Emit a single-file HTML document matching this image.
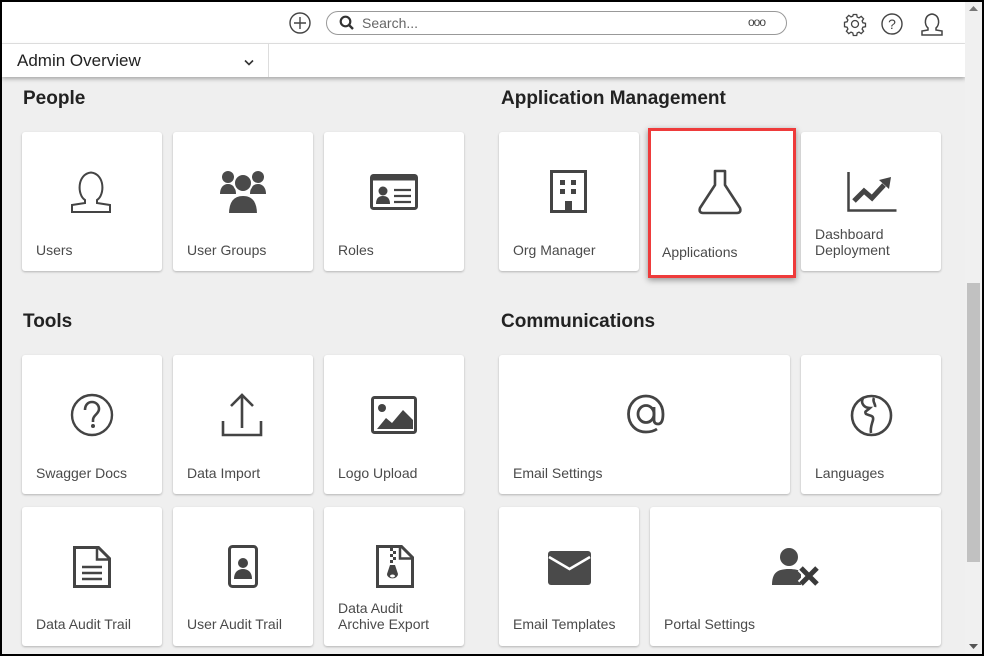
<!DOCTYPE html>
<html><head><meta charset="utf-8"><style>
*{margin:0;padding:0;box-sizing:border-box}
html,body{width:984px;height:656px;overflow:hidden;background:#000;font-family:"Liberation Sans",sans-serif;color:#444}
#f{position:absolute;left:2px;top:2px;width:980px;height:652px;background:#efefef;overflow:hidden}
.a{position:absolute}
.card{position:absolute;background:#fff;border-radius:3px;box-shadow:0 1px 2px rgba(0,0,0,.25)}
.lbl{position:absolute;font-size:14px;color:#4a4a4a;line-height:16px}
h2{position:absolute;font-size:19px;color:#222;font-weight:600}
svg{position:absolute;overflow:visible}
</style></head><body><div id="f">
<div class="a" style="left:0;top:0;width:963px;height:42px;background:#fff;border-bottom:1px solid #e4e4e4"></div>
<div class="a" style="left:0;top:42px;width:963px;height:33px;background:#fff;box-shadow:0 2px 4px rgba(0,0,0,.3)"></div>
<div class="a" style="left:266px;top:42px;width:1px;height:33px;background:#ddd"></div>
<div class="a" style="left:15px;top:49px;font-size:17px;color:#222">Admin Overview</div>
<svg style="left:242px;top:57px" width="10" height="8"><path d="M1 1.5L5 5.5L9 1.5" fill="none" stroke="#333" stroke-width="1.6"/></svg>
<svg style="left:287px;top:10px" width="22" height="22"><circle cx="11" cy="11" r="10" fill="none" stroke="#444" stroke-width="1.4"/><path d="M11 5v12M5 11h12" stroke="#444" stroke-width="1.4"/></svg>
<div class="a" style="left:324px;top:9px;width:461px;height:24px;border:1px solid #999;border-radius:12px"></div>
<svg style="left:337px;top:13px" width="16" height="16"><circle cx="6.5" cy="6.5" r="4.8" fill="none" stroke="#333" stroke-width="2.2"/><path d="M10 10l4 4" stroke="#333" stroke-width="2.4"/></svg>
<div class="a" style="left:360px;top:13px;font-size:14px;color:#666">Search...</div>
<div class="a" style="left:746px;top:13px;font-size:12px;color:#444;letter-spacing:-1px">ooo</div>
<svg style="left:842px;top:11px" width="22" height="22" viewBox="0 0 22 22"><path d="M9.3 1.5h3.4l.5 2.6 1.8.8 2.2-1.5 2.4 2.4-1.5 2.2.8 1.8 2.6.5v3.4l-2.6.5-.8 1.8 1.5 2.2-2.4 2.4-2.2-1.5-1.8.8-.5 2.6H9.3l-.5-2.6-1.8-.8-2.2 1.5-2.4-2.4 1.5-2.2-.8-1.8-2.6-.5V9.3l2.6-.5.8-1.8-1.5-2.2 2.4-2.4 2.2 1.5 1.8-.8z" fill="none" stroke="#444" stroke-width="1.3"/><circle cx="11" cy="11" r="3.5" fill="none" stroke="#444" stroke-width="1.3"/></svg>
<svg style="left:879px;top:11px" width="22" height="22"><circle cx="11" cy="11" r="10" fill="none" stroke="#444" stroke-width="1.4"/><text x="11" y="16" font-size="14" text-anchor="middle" fill="#444" font-family="Liberation Sans">?</text></svg>
<svg style="left:918px;top:10px" width="24" height="24"><path d="M8 16 C4 13 4 3 12 2 C20 3 20 13 16 16 L16 18 L22 19 L22 23 L2 23 L2 19 L8 18Z" fill="none" stroke="#444" stroke-width="1.5"/></svg>
<div class="a" style="left:963px;top:0;width:17px;height:652px;background:#f0f0f0"></div>
<div class="a" style="left:965px;top:281px;width:13px;height:279px;background:#c1c1c1"></div>
<svg style="left:967px;top:4px" width="9" height="6"><path d="M0 5L4.5 0L9 5Z" fill="#777"/></svg>
<svg style="left:967px;top:642px" width="9" height="6"><path d="M0 0L4.5 5L9 0Z" fill="#555"/></svg>

<h2 style="left:21px;top:86px">People</h2>
<h2 style="left:499px;top:86px">Application Management</h2>
<h2 style="left:21px;top:309px">Tools</h2>
<h2 style="left:499px;top:309px">Communications</h2>

<div class="card" style="left:20px;top:130px;width:140px;height:139px"></div>
<div class="card" style="left:171px;top:130px;width:140px;height:139px"></div>
<div class="card" style="left:322px;top:130px;width:140px;height:139px"></div>
<div class="card" style="left:497px;top:130px;width:140px;height:139px"></div>
<div class="card" style="left:646px;top:126px;width:148px;height:150px;border:3px solid #ee3b3b;border-radius:0;box-shadow:0 2px 6px rgba(0,0,0,.4)"></div>
<div class="card" style="left:799px;top:130px;width:140px;height:139px"></div>

<div class="card" style="left:20px;top:353px;width:140px;height:139px"></div>
<div class="card" style="left:171px;top:353px;width:140px;height:139px"></div>
<div class="card" style="left:322px;top:353px;width:140px;height:139px"></div>
<div class="card" style="left:497px;top:353px;width:291px;height:139px"></div>
<div class="card" style="left:799px;top:353px;width:140px;height:139px"></div>

<div class="card" style="left:20px;top:505px;width:140px;height:139px"></div>
<div class="card" style="left:171px;top:505px;width:140px;height:139px"></div>
<div class="card" style="left:322px;top:505px;width:140px;height:139px"></div>
<div class="card" style="left:497px;top:505px;width:140px;height:139px"></div>
<div class="card" style="left:648px;top:505px;width:291px;height:139px"></div>

<div class="lbl" style="left:34px;top:240px">Users</div>
<div class="lbl" style="left:185px;top:240px">User Groups</div>
<div class="lbl" style="left:336px;top:240px">Roles</div>
<div class="lbl" style="left:511px;top:240px">Org Manager</div>
<div class="lbl" style="left:660px;top:242px">Applications</div>
<div class="lbl" style="left:813px;top:224px">Dashboard<br>Deployment</div>
<div class="lbl" style="left:34px;top:463px">Swagger Docs</div>
<div class="lbl" style="left:185px;top:463px">Data Import</div>
<div class="lbl" style="left:336px;top:463px">Logo Upload</div>
<div class="lbl" style="left:511px;top:463px">Email Settings</div>
<div class="lbl" style="left:813px;top:463px">Languages</div>
<div class="lbl" style="left:34px;top:614px">Data Audit Trail</div>
<div class="lbl" style="left:185px;top:614px">User Audit Trail</div>
<div class="lbl" style="left:336px;top:598px">Data Audit<br>Archive Export</div>
<div class="lbl" style="left:511px;top:614px">Email Templates</div>
<div class="lbl" style="left:662px;top:614px">Portal Settings</div>

<svg style="left:68px;top:169px" width="42" height="43"><path d="M15 29 C7 24 7 3 21 1.5 C35 3 35 24 27 29 L27 32 L40 34 L40 41 L2 41 L2 34 L15 32Z" fill="none" stroke="#444" stroke-width="2"/></svg>
<svg style="left:218px;top:168px" width="46" height="44"><g fill="#4a4a4a"><circle cx="8" cy="7" r="6"/><circle cx="38" cy="7" r="6"/><path d="M0 24c0-6 3-10 8-10s8 4 8 10z"/><path d="M30 24c0-6 3-10 8-10s8 4 8 10z"/><circle cx="23" cy="13" r="9" stroke="#fff" stroke-width="2"/><path d="M8 44c0-12 5-19 15-19s15 7 15 19z" stroke="#fff" stroke-width="2"/></g></svg>
<svg style="left:368px;top:172px" width="48" height="36"><rect x="1.5" y="1.5" width="45" height="33" rx="2" fill="none" stroke="#444" stroke-width="3"/><rect x="1.5" y="1.5" width="45" height="5" fill="#444"/><circle cx="13" cy="17" r="4.5" fill="#444"/><path d="M6 30c0-6 3-8 7-8s7 2 7 8z" fill="#444"/><path d="M24 16h17M24 22h17M24 28h17" stroke="#444" stroke-width="2.2"/></svg>
<svg style="left:548px;top:168px" width="37" height="43"><path d="M1.5 1.5h34v40h-34z" fill="none" stroke="#444" stroke-width="3"/><g fill="#444"><rect x="10" y="10" width="5" height="5"/><rect x="21" y="10" width="5" height="5"/><rect x="10" y="19" width="5" height="5"/><rect x="21" y="19" width="5" height="5"/><rect x="15" y="31" width="7" height="12"/></g></svg>
<svg style="left:695px;top:167px" width="46" height="46"><path d="M18 2h10v14l15 23c1 3 0 5-3 5H6c-3 0-4-2-3-5l15-23z" fill="none" stroke="#444" stroke-width="2.6" stroke-linejoin="round"/></svg>
<svg style="left:845px;top:170px" width="50" height="40"><path d="M1.5 0v38.5h48" fill="none" stroke="#444" stroke-width="2.5"/><path d="M7 29l10-10 8 7 12-13" fill="none" stroke="#444" stroke-width="5"/><path d="M32 8l12-3-2 12z" fill="#444"/></svg>
<svg style="left:68px;top:391px" width="44" height="44"><circle cx="22" cy="22" r="20" fill="none" stroke="#444" stroke-width="2.4"/><path d="M15 17c0-5 3-8 7-8s7 3 7 7c0 5-6 6-6 11v2" fill="none" stroke="#444" stroke-width="2.6"/><circle cx="23" cy="33" r="2" fill="#444"/></svg>
<svg style="left:219px;top:391px" width="42" height="44"><path d="M21 2v33M10 13L21 2l11 11M2 28v14h38V28" fill="none" stroke="#444" stroke-width="2.6"/></svg>
<svg style="left:369px;top:394px" width="46" height="38"><rect x="1.5" y="1.5" width="43" height="35" rx="2" fill="none" stroke="#444" stroke-width="3"/><circle cx="11" cy="12" r="4" fill="#444"/><path d="M6 33l9-11 6 5 11-13 10 10v9z" fill="#444"/></svg>
<!-- @ -->
<svg style="left:625px;top:392px" width="38" height="40" viewBox="0 0 38 40"><path d="M27 13v13c0 3 2 4 4 4 4 0 5-5 5-10 0-10-7-18-17-18S1.5 10 1.5 20s7 18 17.5 18c5 0 8-1 11-3" fill="none" stroke="#444" stroke-width="2.8"/><ellipse cx="19" cy="20" rx="8" ry="8.5" fill="none" stroke="#444" stroke-width="2.8"/></svg>
<svg style="left:848px;top:392px" width="43" height="43"><circle cx="21.5" cy="21.5" r="19.5" fill="none" stroke="#444" stroke-width="2.6"/><path d="M13 4c-3 6 2 10 7 10-3 3-6 3-4 6 4 2 8 1 7 6-1 4-3 8-2 13 M24 4c-2 4 2 6 1 9" fill="none" stroke="#444" stroke-width="2.6"/></svg>
<svg style="left:71px;top:544px" width="38" height="42"><path d="M1.5 1.5h24l11 11v28h-35z" fill="none" stroke="#444" stroke-width="3"/><path d="M24 1.5v12h12" fill="none" stroke="#444" stroke-width="2.5"/><path d="M9 21h20M9 27h20M9 33h20" stroke="#444" stroke-width="2.5"/></svg>
<svg style="left:226px;top:543px" width="30" height="43"><rect x="1.5" y="1.5" width="27" height="40" rx="3" fill="none" stroke="#444" stroke-width="3"/><circle cx="15" cy="18" r="5" fill="#444"/><path d="M6 34c0-7 4-10 9-10s9 3 9 10z" fill="#444"/></svg>
<svg style="left:374px;top:543px" width="38" height="43"><path d="M1.5 1.5h24l11 11v29h-35z" fill="none" stroke="#444" stroke-width="3"/><path d="M24 1.5v12h12" fill="none" stroke="#444" stroke-width="2.5"/><path d="M14 3h3v3h-3zM17 6h3v3h-3zM14 9h3v3h-3zM17 12h3v3h-3zM14 15h3v3h-3z" fill="#444"/><path d="M14 20h5l3 9a5 4 0 1 1-11 0z" fill="#444"/><ellipse cx="16.5" cy="31" rx="2.5" ry="1.5" fill="#fff"/></svg>
<svg style="left:546px;top:549px" width="43" height="34"><rect x="0" y="0" width="43" height="34" rx="3" fill="#4a4a4a"/><path d="M1 6l20.5 12L42 6" fill="none" stroke="#fff" stroke-width="2.5"/></svg>
<svg style="left:770px;top:546px" width="50" height="38"><circle cx="17" cy="9" r="9" fill="#4a4a4a"/><path d="M0 37c0-12 5-16 17-16 6 0 10 1 12 3v13z" fill="#4a4a4a"/><path d="M29 20l16 16M45 20L29 36" stroke="#fff" stroke-width="9"/><path d="M29 20l16 16M45 20L29 36" stroke="#3a3a3a" stroke-width="5"/></svg>
</div></body></html>
